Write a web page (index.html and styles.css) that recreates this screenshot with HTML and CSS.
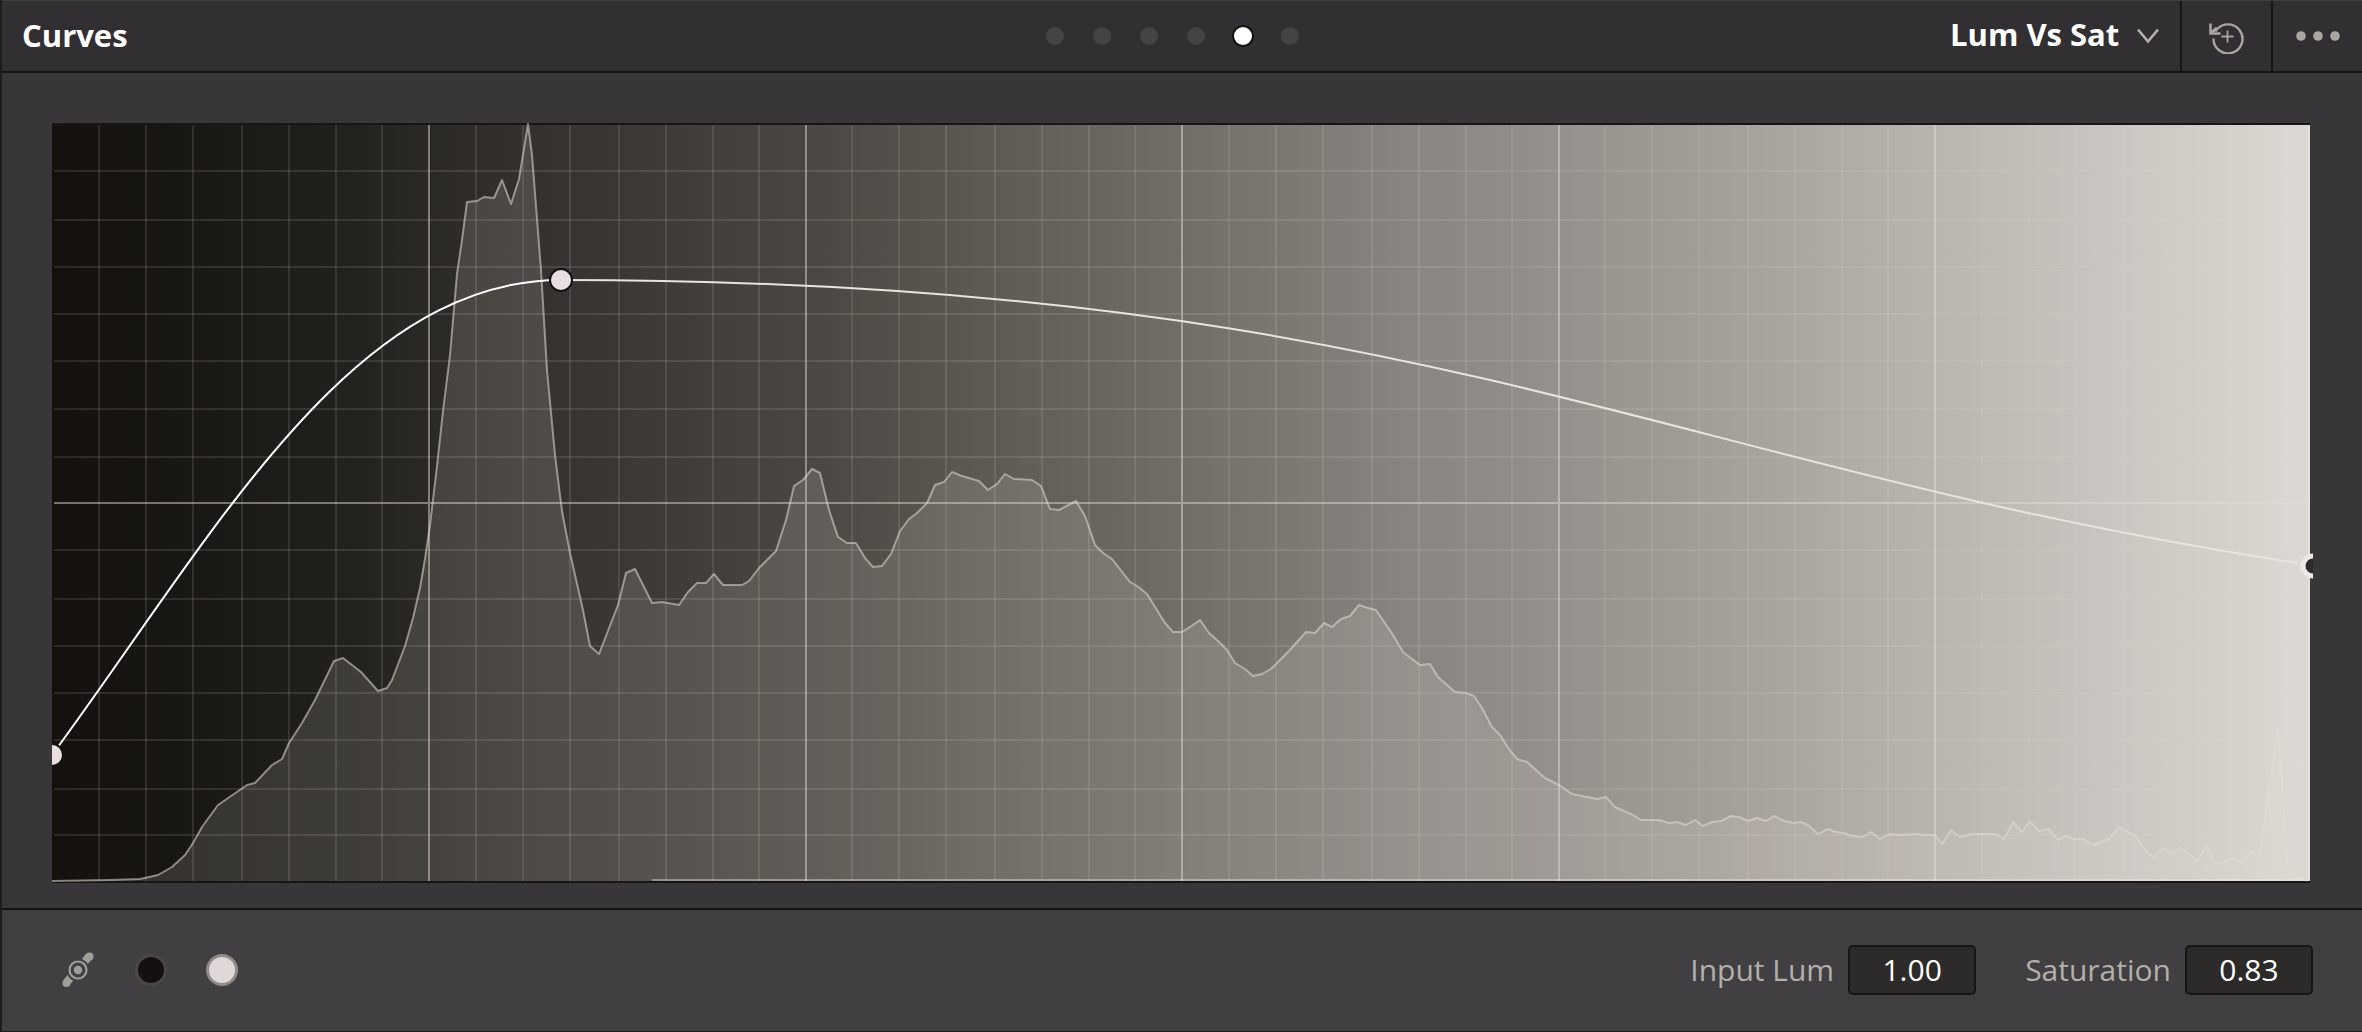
FILE: index.html
```html
<!DOCTYPE html>
<html lang="en">
<head>
    <meta charset="UTF-8">
    <meta name="viewport" content="width=device-width, initial-scale=1.0">
    <title>Curves</title>
    <link rel="stylesheet" href="styles.css">
</head>
<body>

    <header class="header">
        <h1 class="title">Curves</h1>
        <nav class="pages" aria-label="Curve pages">
            <button type="button" class="page" aria-label="Custom"></button>
            <button type="button" class="page" aria-label="Hue Vs Hue"></button>
            <button type="button" class="page" aria-label="Hue Vs Sat"></button>
            <button type="button" class="page" aria-label="Hue Vs Lum"></button>
            <button type="button" class="page active" aria-label="Lum Vs Sat"></button>
            <button type="button" class="page" aria-label="Sat Vs Sat"></button>
        </nav>
        <div class="tools">
            <label class="mode">
                <select class="mode-select" aria-label="Curve mode">
                    <option>Lum Vs Sat</option>
                </select>
                <svg class="chevron" width="24" height="18" viewBox="0 0 24 18" aria-hidden="true">
                    <path d="M2 2.5 12 14.5 22 2.5" fill="none" stroke="#b5b1ac" stroke-width="2.6"/>
                </svg>
            </label>
            <button type="button" class="tool" aria-label="Reset">
                <svg width="36" height="36" viewBox="0 0 36 36" fill="none" stroke="#a8a49f" aria-hidden="true">
                    <path d="M6.5 13.5A14.5 14.5 0 1 1 4.500 20.500" stroke-width="2.4"/>
                    <path d="M1.500 5.500V15.500H11.500" stroke-width="2.6"/>
                    <path d="M2 15 8 10" stroke-width="3"/>
                    <path d="M18.500 12.500V24.500M12.500 18.500H24.500" stroke-width="1.8"/>
                </svg>
            </button>
            <button type="button" class="tool" aria-label="More">
                <svg width="46" height="12" viewBox="0 0 46 12" fill="#aaa6a1" aria-hidden="true">
                    <circle cx="6" cy="6" r="4.8"/>
                    <circle cx="23" cy="6" r="4.8"/>
                    <circle cx="40" cy="6" r="4.8"/>
                </svg>
            </button>
        </div>
    </header>

    <main class="graph">
        <svg class="plot" viewBox="0 0 2258 760" role="img" aria-label="Luminance versus saturation curve">
            <defs>
                <linearGradient id="ramp">
                    <stop offset="0" stop-color="#14100d"/>
                    <stop offset="0.04" stop-color="#171512"/>
                    <stop offset="0.12" stop-color="#201f1b"/>
                    <stop offset="0.167" stop-color="#2b2925"/>
                    <stop offset="0.22" stop-color="#363230"/>
                    <stop offset="0.333" stop-color="#4a4641"/>
                    <stop offset="0.417" stop-color="#5e5b55"/>
                    <stop offset="0.5" stop-color="#716e68"/>
                    <stop offset="0.6" stop-color="#888580"/>
                    <stop offset="0.667" stop-color="#94908b"/>
                    <stop offset="0.75" stop-color="#a6a19a"/>
                    <stop offset="0.833" stop-color="#b9b4ad"/>
                    <stop offset="0.9" stop-color="#c8c3be"/>
                    <stop offset="0.96" stop-color="#d4cfc9"/>
                    <stop offset="1" stop-color="#dcd9d4"/>
                </linearGradient>
                <clipPath id="edge"><path d="M0 0H2261V760H0Z"/></clipPath>
                <path id="histogram" d="M0 758 58 757 88 756 106 752 120 744 133 732 141 720 150 704 166 682 195 662 203 660 220 642 230 636 237 620 250 600 263 577 282 538 291 535 309 549 326 568 335 565 340 557 353 523 361 495 368 465 373 436 378 402 385 343 391 288 398 232 405 151 410 117 415 79 425 78 432 74 442 75 450 57 459 81 467 56 476 1 480 32 489 147 495 247 503 332 510 388 518 430 531 487 538 523 547 531 566 482 574 450 583 446 600 480 610 479 627 482 636 469 645 460 654 460 662 451 671 462 690 462 697 458 707 445 724 428 734 397 742 363 751 357 760 346 768 350 777 387 786 414 795 420 804 420 813 435 821 444 830 443 839 431 848 408 857 396 865 390 875 380 883 362 892 359 900 349 910 353 927 358 936 367 945 361 953 351 962 356 980 357 989 363 998 386 1007 387 1024 378 1033 393 1043 422 1051 430 1060 436 1078 459 1085 463 1095 471 1113 500 1121 509 1130 509 1138 504 1148 497 1157 510 1166 518 1175 527 1183 540 1193 546 1201 553 1210 551 1219 546 1236 529 1254 509 1263 510 1272 500 1280 504 1289 496 1298 493 1307 482 1316 485 1324 487 1341 512 1351 529 1360 536 1368 542 1378 541 1386 554 1403 569 1414 570 1422 573 1430 585 1440 604 1448 612 1457 626 1465 636 1475 639 1493 655 1507 662 1520 671 1545 676 1554 674 1563 684 1581 692 1589 697 1607 697 1617 700 1625 699 1634 702 1643 697 1651 703 1660 699 1669 698 1679 693 1687 694 1696 698 1705 695 1714 698 1722 693 1732 698 1741 700 1749 699 1757 703 1766 711 1776 706 1784 709 1792 710 1800 713 1810 714 1819 709 1828 716 1837 711 1846 712 1865 711 1874 712 1883 712 1890 721 1899 707 1908 714 1920 711 1944 711 1952 716 1961 699 1970 709 1978 698 1987 708 1996 706 2006 717 2014 713 2022 716 2031 716 2041 722 2057 716 2067 704 2076 709 2084 713 2091 725 2101 734 2111 725 2119 730 2129 725 2146 738 2154 722 2164 742 2181 735 2189 739 2200 728 2208 731 2218 660 2226 607 2230 660 2235 737 2241 750 2255 758"/>
            </defs>

            <rect width="2258" height="758" fill="url(#ramp)"/>
            <use href="#histogram" class="hist-fill"/>

            <!-- grid -->
            <path class="grid-minor" d="M47 1V758M94 1V758M141 1V758M190 1V758M237 1V758M284 1V758M330 1V758M424 1V758M471 1V758M518 1V758M567 1V758M614 1V758M661 1V758M707 1V758M800 1V758M847 1V758M894 1V758M943 1V758M990 1V758M1037 1V758M1083 1V758M1177 1V758M1224 1V758M1271 1V758M1320 1V758M1367 1V758M1414 1V758M1460 1V758M1553 1V758M1600 1V758M1647 1V758M1696 1V758M1743 1V758M1790 1V758M1836 1V758M1930 1V758M1977 1V758M2023 1V758M2072 1V758M2119 1V758M2166 1V758M2213 1V758"/>
            <path class="grid-minor" d="M2 48H2258M2 97H2258M2 144H2258M2 191H2258M2 238H2258M2 286H2258M2 334H2258M2 427H2258M2 476H2258M2 523H2258M2 570H2258M2 617H2258M2 666H2258M2 712H2258"/>
            <path class="grid-major" d="M377 1V758M754 1V758M1130 1V758M1507 1V758M1883 1V758M2 380H2258"/>

            <path class="border-dark" d="M0 1H2258M0 759H2258"/>
            <path class="border-light" d="M600 757H2258M2257 2V758"/>
            <use href="#histogram" class="hist-line"/>

            <!-- curve and control points -->
            <g clip-path="url(#edge)">
                <path class="curve" d="M0 632C160 415 298 157 509 157"/>
                <path class="curve curve-right" d="M509 157C1366 157 1612 344 2246 440"/>
                <circle class="point" cx="0" cy="632" r="11"/>
                <circle class="point" cx="509" cy="157" r="11"/>
                <circle class="point-selected" cx="2261" cy="443" r="10"/>
            </g>
        </svg>
    </main>

    <footer class="footer">
        <div class="pickers">
            <button type="button" class="picker" aria-label="Edit spline">
                <svg width="36" height="40" viewBox="0 0 36 40" aria-hidden="true">
                    <path d="M7 32 13 24.5M23.5 13 29 6.5" stroke="#a09e99" stroke-width="8"/>
                    <circle cx="6.5" cy="33" r="4" fill="#a09e99"/>
                    <circle cx="29.5" cy="6.5" r="4" fill="#a09e99"/>
                    <circle cx="18" cy="20" r="11.5" fill="#413f42"/>
                    <circle cx="18" cy="20" r="8.5" fill="#413f42" stroke="#a09e99" stroke-width="2.2"/>
                    <circle cx="18" cy="20" r="4.2" fill="#a09e99"/>
                </svg>
            </button>
            <button type="button" class="swatch black" aria-label="Black"></button>
            <button type="button" class="swatch white" aria-label="White"></button>
        </div>
        <form class="values">
            <label class="value">Input Lum <input type="text" value="1.00"></label>
            <label class="value">Saturation <input type="text" value="0.83"></label>
        </form>
    </footer>

</body>
</html>
```
FILE: styles.css
```css
* {
    box-sizing: border-box;
}
body {
    margin: 0;
    min-height: 100vh;
    display: flex;
    flex-direction: column;
    font-family: "Open Sans", "Noto Sans", sans-serif;
    font-size: 30px;
    color: #ffffff;
    background-color: #39363a;
    border-left: 2px solid #1e1c1d;
    border-bottom: 1px solid #1e1c1d;
}
button {
    padding: 0;
    border: none;
    background: none;
    cursor: pointer;
}
svg {
    display: block;
}

.header {
    display: flex;
    align-items: stretch;
    height: 73px;
    background-color: #312f32;
    border-top: 1px solid #403e41;
    border-bottom: 2px solid #171516;
}
.title {
    flex: 1;
    margin: 0;
    padding-left: 20px;
    font-size: 31px;
    font-weight: 700;
    line-height: 68px;
}
.pages {
    display: flex;
    align-items: center;
    gap: 29px;
    padding-right: 40px;
}
.page {
    width: 18px;
    height: 18px;
    border-radius: 50%;
    background-color: #454345;
}
.page.active {
    background-color: #ffffff;
    box-shadow: 0 0 0 2px #141213;
}
.tools {
    flex: 1;
    display: flex;
    justify-content: flex-end;
}
.mode {
    display: flex;
    align-items: center;
    gap: 16px;
    padding-right: 20px;
}
.mode-select {
    appearance: none;
    padding: 0 0 4px;
    border: none;
    background: none;
    color: #ffffff;
    font-family: inherit;
    font-size: 31px;
    font-weight: 700;
}
.tool {
    display: flex;
    align-items: center;
    justify-content: center;
    width: 91px;
    border-left: 2px solid #171516;
}

.graph {
    flex: 1;
    padding: 50px 52px 25px 50px;
}
.plot {
    width: 100%;
    height: auto;
    overflow: visible;
}
.hist-fill {
    fill: rgba(225, 220, 215, 0.15);
}
.hist-line {
    fill: none;
    stroke: rgba(225, 221, 214, 0.55);
    stroke-width: 2;
    stroke-linejoin: round;
}
.grid-minor {
    stroke: rgba(225, 220, 210, 0.13);
    stroke-width: 2;
}
.grid-major {
    stroke: rgba(225, 221, 214, 0.48);
    stroke-width: 2;
}
.border-dark {
    stroke: #171516;
    stroke-width: 2;
}
.border-light {
    fill: none;
    stroke: rgba(240, 238, 232, 0.4);
    stroke-width: 2;
}
.curve {
    fill: none;
    stroke: #ffffff;
    stroke-width: 2;
}
.curve-right {
    stroke: #e8e4de;
}
.point {
    fill: #e8e0e0;
    stroke: #141213;
    stroke-width: 2;
}
.point-selected {
    fill: #2c292b;
    stroke: #efe6e6;
    stroke-width: 5;
}

.footer {
    display: flex;
    align-items: center;
    justify-content: space-between;
    height: 123px;
    padding: 0 49px 2px 58px;
    background-color: #413f42;
    border-top: 2px solid #141213;
}
.pickers {
    display: flex;
    align-items: center;
    gap: 39px;
}
.swatch {
    width: 32px;
    height: 32px;
    border-radius: 50%;
}
.black {
    background-color: #14100f;
    border: 3px solid #4a4744;
}
.white {
    background-color: #e0d8d8;
    border: 3px solid #8f8b8a;
}
.values {
    display: flex;
    gap: 49px;
}
.value {
    display: flex;
    align-items: center;
    gap: 14px;
    color: #b3afaa;
}
.value input {
    width: 128px;
    height: 50px;
    padding: 0;
    border: 2px solid #171516;
    border-radius: 5px;
    background-color: #2d2b29;
    color: #ffffff;
    font-family: inherit;
    font-size: 30px;
    font-weight: 500;
    text-align: center;
}
```
